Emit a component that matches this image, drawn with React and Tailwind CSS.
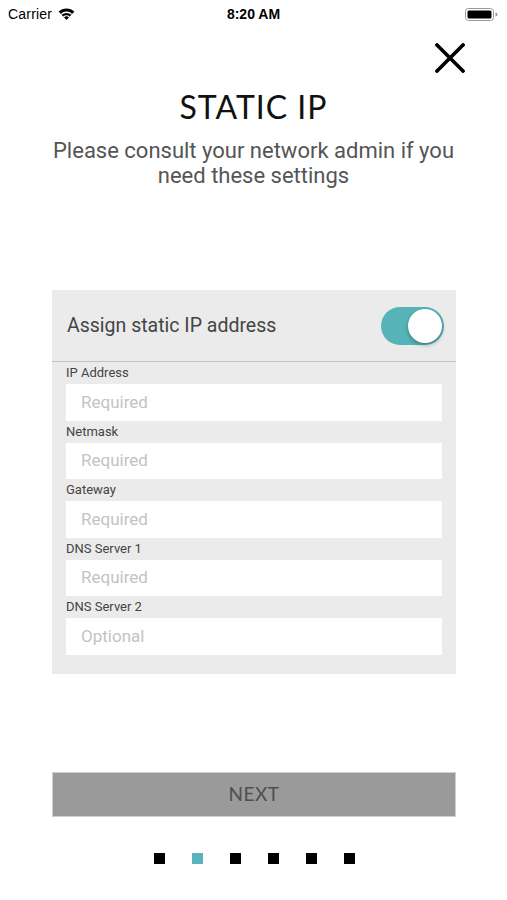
import React from 'react';

const FIELDS = [
  { label: 'IP Address', placeholder: 'Required' },
  { label: 'Netmask', placeholder: 'Required' },
  { label: 'Gateway', placeholder: 'Required' },
  { label: 'DNS Server 1', placeholder: 'Required' },
  { label: 'DNS Server 2', placeholder: 'Optional' },
];

function Wifi() {
  return (
    <svg width="17" height="12" viewBox="0 0 17 12" className="ml-[6px]">
      <path d="M8.5 12 L0.6 3.6 A11.5 11.5 0 0 1 16.4 3.6 Z" fill="#000" />
      <path d="M3.2 6.4 A7.6 7.6 0 0 1 13.8 6.4" stroke="#fff" strokeWidth="1.3" fill="none" />
      <path d="M5.6 9 A4.2 4.2 0 0 1 11.4 9" stroke="#fff" strokeWidth="1.3" fill="none" />
    </svg>
  );
}

function Battery() {
  return (
    <svg width="33" height="13" viewBox="0 0 33 13">
      <rect x="0.5" y="0.5" width="28" height="12" rx="3" fill="none" stroke="#999" strokeWidth="1" />
      <rect x="2.5" y="2.5" width="24" height="8" rx="1.5" fill="#000" />
      <path d="M30.5 4.5 a2 2 0 0 1 0 4 Z" fill="#999" />
    </svg>
  );
}

export default function App() {
  return (
    <div className="w-full h-[900px] bg-white font-['Roboto',sans-serif] text-black">
      {/* status bar */}
      <div className="relative h-[28px] flex items-center justify-between px-[8px]">
        <div className="flex items-center text-[14px] leading-none font-['Liberation_Sans',sans-serif] tracking-[0.2px]">
          Carrier
          <Wifi />
        </div>
        <div className="absolute left-0 right-0 text-center text-[14px] font-semibold font-['Liberation_Sans',sans-serif] leading-none pointer-events-none">
          8:20 AM
        </div>
        <div className="pr-[1px]"><Battery /></div>
      </div>

      {/* close */}
      <div className="h-[59px] flex justify-end items-start pr-[42px] pt-[15px]">
        <svg width="30" height="30" viewBox="0 0 30 30">
          <path d="M2 2 L28 28 M28 2 L2 28" stroke="#000" strokeWidth="3.6" strokeLinecap="square" />
        </svg>
      </div>

      <h1 className="text-center text-[32px] leading-[40px] font-['Lato',sans-serif] tracking-[1px] text-[#111]">
        STATIC IP
      </h1>
      <p className="mt-[11px] text-center text-[22px] leading-[25px] text-[#555] px-[30px]">
        Please consult your network admin if you need these settings
      </p>

      {/* panel */}
      <div className="mt-[102px] mx-[52px] w-[404px] bg-[#ebebeb] pb-[19px]">
        <div className="h-[72px] flex items-center justify-between pl-[15px] pr-[12px] border-b border-[#c2c2c2]">
          <span className="text-[19.5px] text-[#444]">Assign static IP address</span>
          <div className="w-[63px] h-[38px] rounded-full bg-[#56b4b8] flex items-center justify-end pr-[2px]">
            <div className="w-[34px] h-[34px] rounded-full bg-white shadow-[0_2px_4px_rgba(0,0,0,0.3)]" />
          </div>
        </div>
        <div className="px-[14px]">
          {FIELDS.map((f) => (
            <div key={f.label}>
              <div className="h-[22px] pt-[3px] text-[13px] leading-[16px] text-[#444]">{f.label}</div>
              <div className="h-[36.5px] bg-white flex items-center pl-[15px] text-[17px] text-[#c3c3c3]">
                {f.placeholder}
              </div>
            </div>
          ))}
        </div>
      </div>

      {/* next */}
      <div className="mt-[98px] mx-[52px] w-[404px] h-[45px] bg-[#9a9a9a] border border-[#cfcfcf] flex items-center justify-center">
        <span className="text-[19px] font-['Lato',sans-serif] tracking-[0.5px] text-[#4f4f4f]">NEXT</span>
      </div>

      {/* dots */}
      <div className="mt-[36px] flex justify-center gap-[27px] pl-[1px]">
        {[0, 1, 2, 3, 4, 5].map((i) => (
          <div key={i} className={i === 1 ? 'w-[11px] h-[11px] bg-[#5ab4c0]' : 'w-[11px] h-[11px] bg-black'} />
        ))}
      </div>
    </div>
  );
}
